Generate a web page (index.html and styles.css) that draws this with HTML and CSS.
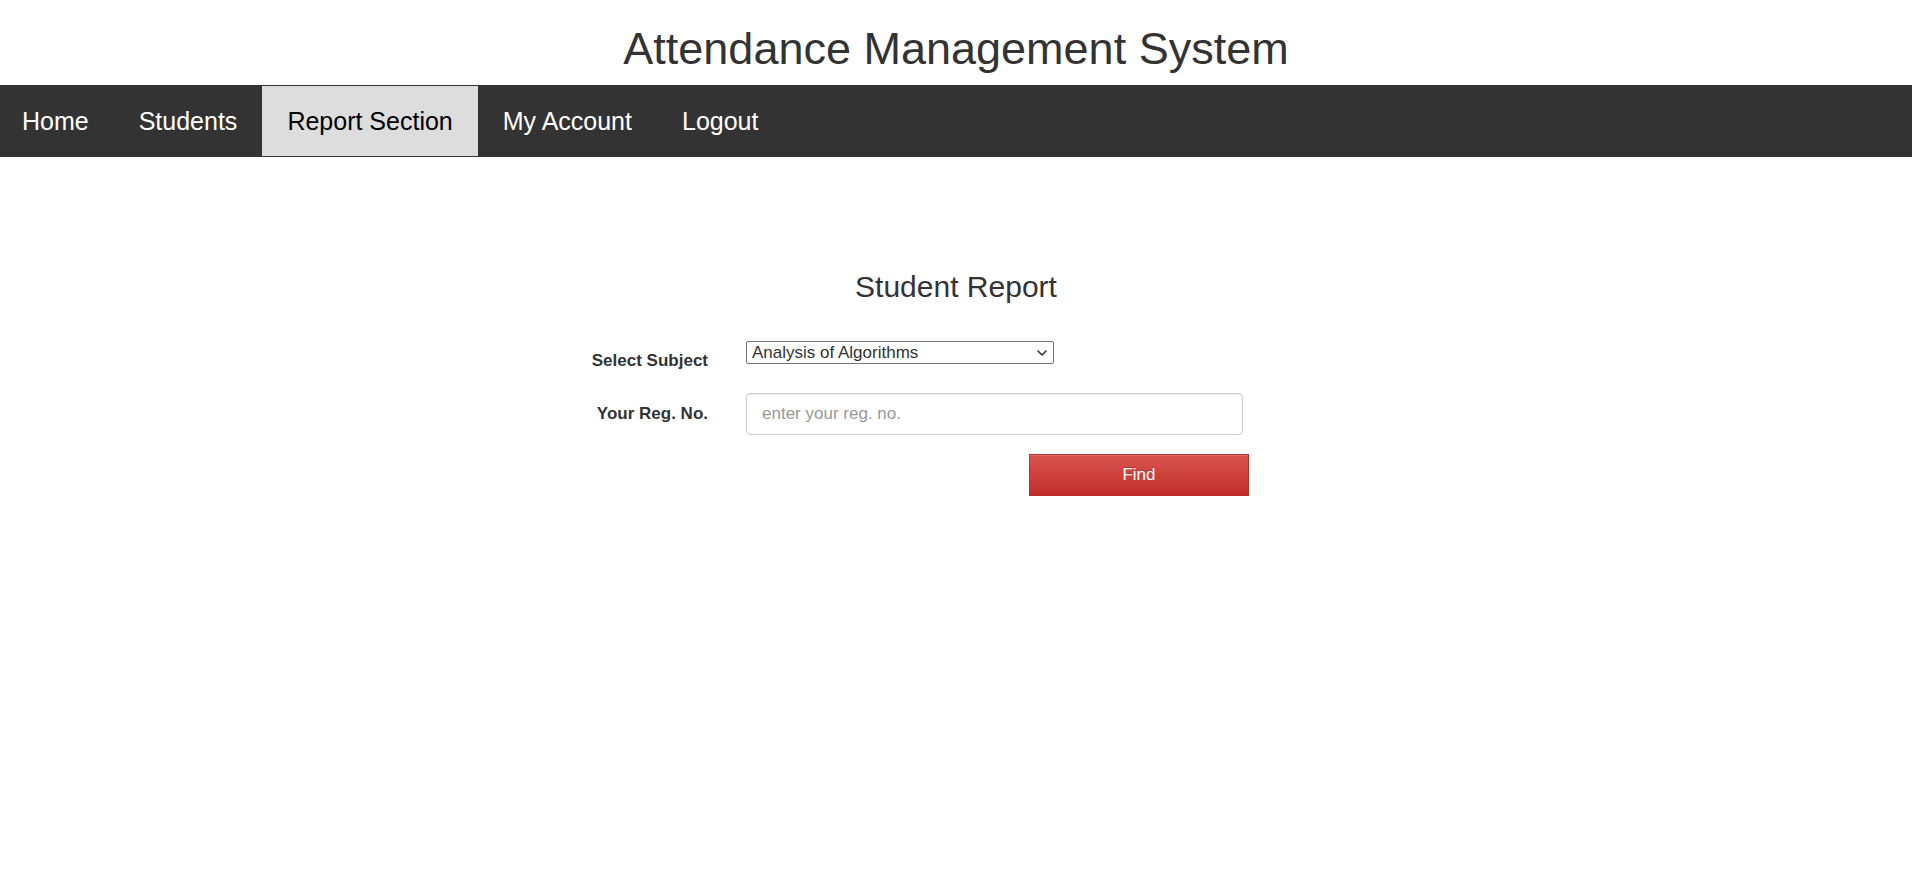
FILE: index.html
```html
<!DOCTYPE html>
<html lang="en">
<head>
<meta charset="utf-8">
<title>Attendance Management System</title>
<link rel="stylesheet" href="styles.css">
</head>
<body>
<header class="site-header">
  <h1 class="site-title">Attendance Management System</h1>
  <nav class="topnav">
    <a class="nav-link" href="#">Home</a>
    <a class="nav-link" href="#">Students</a>
    <a class="nav-link active" href="#">Report Section</a>
    <a class="nav-link" href="#">My Account</a>
    <a class="nav-link" href="#">Logout</a>
  </nav>
</header>
<main class="content">
  <h2 class="report-title">Student Report</h2>
  <form class="report-form">
    <label class="field-label label-top" for="subject">Select Subject</label>
    <div class="select-wrap">
      <select class="subject-select" id="subject">
        <option>Analysis of Algorithms</option>
        <option>Operating Systems</option>
        <option>Computer Networks</option>
      </select>
      <svg class="select-chevron" width="10" height="6" viewBox="0 0 10 6" aria-hidden="true">
        <path d="M1 1 L5 5 L9 1" fill="none" stroke="#333" stroke-width="1.6" stroke-linecap="round" stroke-linejoin="round"/>
      </svg>
    </div>
    <label class="field-label label-mid" for="regno">Your Reg. No.</label>
    <input class="text-input" id="regno" type="text" placeholder="enter your reg. no.">
    <span class="spacer"></span>
    <button class="btn-find" type="button">Find</button>
  </form>
</main>
</body>
</html>
```

FILE: styles.css
```css
* {
  box-sizing: border-box;
}

html, body {
  margin: 0;
  padding: 0;
  background: #fff;
}

body {
  font-family: "Liberation Sans", Arial, sans-serif;
  color: #333;
}

.site-title {
  margin: 0;
  padding: 23px 0 10px;
  font-size: 45px;
  line-height: 52px;
  font-weight: normal;
  text-align: center;
  color: #333;
}

.topnav {
  display: flex;
  height: 72px;
  padding: 1px 0;
  background: #333;
}

.nav-link {
  display: flex;
  align-items: center;
  padding: 0 25px;
  font-size: 25px;
  color: #fff;
  text-decoration: none;
}

.nav-link:first-child {
  padding-left: 22px;
}

.nav-link.active {
  background: #ddd;
  color: #000;
}

.content {
  padding-top: 112px;
}

.report-title {
  margin: 0 0 37px;
  font-size: 30px;
  line-height: 35px;
  font-weight: normal;
  text-align: center;
  color: #333;
}

.report-form {
  display: grid;
  grid-template-columns: 140px 503px;
  column-gap: 38px;
  width: 681px;
  margin-left: calc(50% - 388px);
}

.field-label {
  justify-self: end;
  font-size: 17px;
  line-height: 20px;
  font-weight: bold;
  color: #333;
  white-space: nowrap;
}

.label-top {
  align-self: start;
  margin-top: 10px;
}

.label-mid {
  align-self: center;
  margin-top: 22px;
}

.select-wrap {
  position: relative;
  width: 308px;
  height: 23px;
}

.subject-select {
  -webkit-appearance: none;
  appearance: none;
  width: 308px;
  height: 23px;
  margin: 0;
  padding: 0 24px 0 5px;
  border: 1px solid #767676;
  border-radius: 2px;
  background: #fff;
  font-family: "Liberation Sans", Arial, sans-serif;
  font-size: 17px;
  color: #333;
}

.select-chevron {
  position: absolute;
  right: 7px;
  top: 9px;
  pointer-events: none;
}

.text-input {
  width: 497px;
  height: 42px;
  margin: 22px 0 0;
  padding: 0 15px;
  border: 1px solid #ccc;
  border-radius: 4px;
  box-shadow: inset 0 1px 1px rgba(0, 0, 0, 0.075);
  font-family: "Liberation Sans", Arial, sans-serif;
  font-size: 17px;
  color: #333;
}

.text-input::placeholder {
  color: #999;
}

.btn-find {
  justify-self: end;
  width: 220px;
  height: 42px;
  margin-top: 19px;
  border: 1px solid #b92c28;
  border-radius: 0;
  background: linear-gradient(to bottom, #d9534f 0%, #c12e2a 100%);
  box-shadow: inset 0 1px 0 rgba(255, 255, 255, 0.15), 0 1px 1px rgba(0, 0, 0, 0.075);
  font-family: "Liberation Sans", Arial, sans-serif;
  font-size: 17px;
  color: #fff;
  text-shadow: 0 -1px 0 rgba(0, 0, 0, 0.2);
  cursor: pointer;
}
```
